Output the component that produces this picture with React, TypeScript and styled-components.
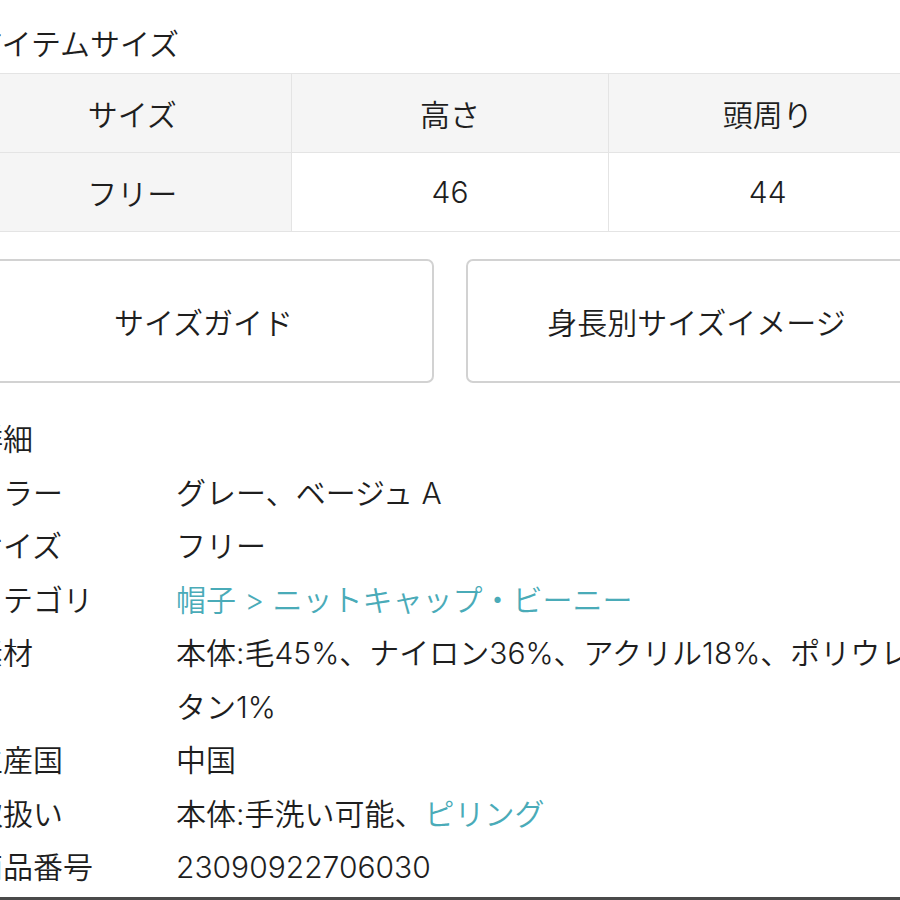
import React from "react";
import styled, { createGlobalStyle } from "styled-components";

const Global = createGlobalStyle`
  html, body {
    margin: 0;
    padding: 0;
    background: #ffffff;
    overflow: hidden;
  }
  body {
    width: 900px;
    height: 900px;
  }
`;

const Page = styled.div`
  width: 954px;
  margin-left: -27px;
  height: 897px;
  font-family: "Inter", "Noto Sans CJK JP", "Noto Sans", sans-serif;
  font-size: 30px;
  font-weight: 350;
  color: #1e1e1e;
  border-bottom: 3px solid #4a4a4a;
  box-sizing: content-box;
`;

const Title = styled.h2`
  margin: 0 0 9px 0;
  padding-top: 24px;
  font-size: 30px;
  font-weight: 350;
  line-height: 40px;
`;

const SizeTable = styled.table`
  width: 100%;
  border-collapse: collapse;
  table-layout: fixed;
`;

const Cell = styled.td<{ $shade?: boolean }>`
  height: 78px;
  padding: 0;
  text-align: center;
  vertical-align: middle;
  border: 1px solid #e4e4e4;
  background: ${(p) => (p.$shade ? "#f5f5f5" : "#ffffff")};
  font-size: 30px;
  font-weight: 350;
`;

const ButtonRow = styled.div`
  display: grid;
  grid-template-columns: 1fr 1fr;
  gap: 32px;
  margin-top: 27px;
`;

const GuideButton = styled.button`
  height: 124px;
  background: #ffffff;
  border: 2px solid #d2d2d2;
  border-radius: 7px;
  font-family: inherit;
  font-size: 30px;
  font-weight: 350;
  color: #1e1e1e;
  padding: 0;
  cursor: pointer;
`;

const DetailHeading = styled.h3`
  margin: 30px 0 0 0;
  font-size: 30px;
  font-weight: 350;
  line-height: 53.5px;
`;

const DetailList = styled.dl`
  margin: 0;
  display: grid;
  grid-template-columns: 203px 1fr;
  line-height: 53.5px;
`;

const Label = styled.dt`
  margin: 0;
`;

const Value = styled.dd`
  margin: 0;
`;

const Link = styled.a`
  color: #4aabb8;
  text-decoration: none;
`;

const details: { label: string; value: React.ReactNode }[] = [
  { label: "カラー", value: "グレー、ベージュ A" },
  { label: "サイズ", value: "フリー" },
  {
    label: "カテゴリ",
    value: <Link href="#">帽子 &gt; ニットキャップ・ビーニー</Link>,
  },
  {
    label: "素材",
    value: "本体:毛45%、ナイロン36%、アクリル18%、ポリウレタン1%",
  },
  { label: "生産国", value: "中国" },
  {
    label: "取扱い",
    value: (
      <>
        本体:手洗い可能、<Link href="#">ピリング</Link>
      </>
    ),
  },
  { label: "商品番号", value: "23090922706030" },
];

export default function App() {
  return (
    <>
      <Global />
      <Page>
        <Title>アイテムサイズ</Title>
        <SizeTable>
          <tbody>
            <tr>
              <Cell as="th" $shade>サイズ</Cell>
              <Cell as="th" $shade>高さ</Cell>
              <Cell as="th" $shade>頭周り</Cell>
            </tr>
            <tr>
              <Cell as="th" $shade>フリー</Cell>
              <Cell>46</Cell>
              <Cell>44</Cell>
            </tr>
          </tbody>
        </SizeTable>
        <ButtonRow>
          <GuideButton>サイズガイド</GuideButton>
          <GuideButton>身長別サイズイメージ</GuideButton>
        </ButtonRow>
        <DetailHeading>詳細</DetailHeading>
        <DetailList>
          {details.map((d) => (
            <React.Fragment key={d.label}>
              <Label>{d.label}</Label>
              <Value>{d.value}</Value>
            </React.Fragment>
          ))}
        </DetailList>
      </Page>
    </>
  );
}
